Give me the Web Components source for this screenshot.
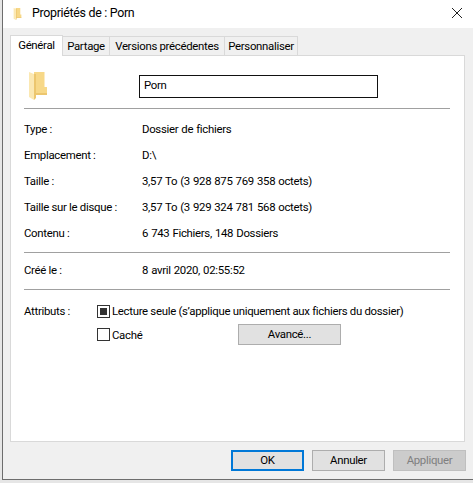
<!DOCTYPE html>
<html>
<head>
<meta charset="utf-8">
<style>
  html, body { margin: 0; height: 100%; background: #e6e6e6; overflow: hidden; }
</style>
</head>
<body>
<prop-dialog title="Propriétés de : Porn" name="Porn"></prop-dialog>

<script>
const UI_FONT = `Roboto, "Liberation Sans", sans-serif`;
const UI_TEXT = `font: 11.4px/18px ${UI_FONT}; letter-spacing: -0.3px; color: #000;`;

const FOLDER = `
  <svg viewBox="0 0 18 28" width="100%" height="100%">
    <path d="M5 0 L15.5 0 L15.5 15 L18 15 L18 23 L5 23 Z" fill="#f7d888"/>
    <path d="M5 2 L7 2 L7 21 L18 21 L18 23 L7 23 L7 26 L5 28 Z" fill="#ecc66e"/>
    <path d="M0 0 L5 2 L5 28 L0 25 Z" fill="#fbe8b2"/>
  </svg>`;

class TabStrip extends HTMLElement {
  constructor() {
    super();
    this.attachShadow({ mode: 'open' });
    this.shadowRoot.innerHTML = `
      <style>
        :host { display: flex; align-items: flex-end; height: 20px; padding-left: 7px; position: relative; z-index: 1; }
        .tab {
          box-sizing: border-box; height: 19px; margin-right: -1px; text-align: center;
          background: #f0f0f0; border: 1px solid #d9d9d9; border-bottom: 0;
          ${UI_TEXT} white-space: nowrap;
        }
        .tab.on {
          height: 21px; margin-bottom: -1px; background: #fff;
          position: relative; z-index: 1;
        }
      </style>
      <div class="tab on" style="width:53px">Général</div>
      <div class="tab" style="width:48px">Partage</div>
      <div class="tab" style="width:116px">Versions précédentes</div>
      <div class="tab" style="width:74px">Personnaliser</div>
    `;
  }
}

class PropRow extends HTMLElement {
  constructor() {
    super();
    this.attachShadow({ mode: 'open' });
    this.shadowRoot.innerHTML = `
      <style>
        :host { display: grid; grid-template-columns: 118px 1fr; height: 26px; ${UI_TEXT} }
        div { white-space: nowrap; }
        .val { word-spacing: 0.5px; }
      </style>
      <div><slot name="label"></slot></div>
      <div class="val"><slot></slot></div>
    `;
  }
}

class CheckBox extends HTMLElement {
  constructor() {
    super();
    this.attachShadow({ mode: 'open' });
    this.shadowRoot.innerHTML = `
      <style>
        :host { display: flex; align-items: center; gap: 2px; ${UI_TEXT} white-space: nowrap; }
        .box { box-sizing: border-box; width: 13px; height: 13px; border: 1px solid #333; background: #fff; display: grid; place-items: center; flex: none; }
        :host([mixed]) .box::after { content: ""; width: 7px; height: 7px; background: #333; }
      </style>
      <span class="box"></span><slot></slot>
    `;
  }
}

class DlgButton extends HTMLElement {
  constructor() {
    super();
    this.attachShadow({ mode: 'open' });
    this.shadowRoot.innerHTML = `
      <style>
        :host {
          display: block; box-sizing: border-box; width: 73px; height: 21px;
          background: #e1e1e1; border: 1px solid #adadad; text-align: center;
          ${UI_TEXT} line-height: 19px;
        }
        :host([primary]) { border: 2px solid #0078d7; line-height: 17px; }
        :host([disabled]) { background: #cccccc; border-color: #bfbfbf; color: #7f7f7f; }
      </style>
      <slot></slot>
    `;
  }
}

class PropDialog extends HTMLElement {
  constructor() {
    super();
    this.attachShadow({ mode: 'open' });
    const name = this.getAttribute('name');
    this.shadowRoot.innerHTML = `
      <style>
        :host {
          display: block; box-sizing: border-box; width: 471px; height: 480px; margin-left: 2px;
          background: #f0f0f0; border-left: 1px solid #6d6d6d; border-bottom: 1px solid #6d6d6d;
          ${UI_TEXT}
        }
        .title { height: 28px; background: #fff; display: flex; align-items: center; position: relative; padding-left: 10px; }
        .title .ico { width: 9px; height: 12px; margin-right: 10px; margin-bottom: 3px; }
        .title .txt { font-size: 12.4px; letter-spacing: -0.3px; margin-bottom: 2px; }
        .title svg.x { position: absolute; right: 10px; top: 7px; }
        .body { padding-top: 7px; }
        .panel {
          box-sizing: border-box; margin-left: 7px; width: 455px; height: 387px;
          background: #fff; border: 1px solid #d9d9d9; padding: 0 13px;
        }
        .head { display: flex; align-items: center; padding: 16px 0 8px; }
        .head .ico { width: 18px; height: 28px; margin-left: 5px; }
        .name {
          box-sizing: border-box; margin-left: 92px; width: 239px; height: 23px;
          border: 1px solid #111; padding: 0 4px; line-height: 19px;
        }
        hr { border: 0; border-top: 1px solid #a0a0a0; margin: 0; width: 426px; }
        .rows { padding-top: 11px; }
        .foot { display: flex; justify-content: flex-end; gap: 8px; padding: 8px 7px 0 0; }
        .attr { display: grid; grid-template-columns: 73px 1fr; padding-top: 12px; }
        .second { display: flex; align-items: center; margin-top: 4px; }
        .second check-box { flex: 0 0 141px; }
        .adv { width: 103px; }
      </style>
      <div class="title">
        <span class="ico">${FOLDER}</span>
        <span class="txt">${this.getAttribute('title')}</span>
        <svg class="x" width="12" height="12" viewBox="0 0 12 12"><path d="M1 1 L11 11 M11 1 L1 11" stroke="#222" stroke-width="1" fill="none"/></svg>
      </div>
      <div class="body">
        <tab-strip></tab-strip>
        <div class="panel">
          <div class="head"><span class="ico">${FOLDER}</span><div class="name">${name}</div></div>
          <hr>
          <div class="rows">
            <prop-row><span slot="label">Type :</span>Dossier de fichiers</prop-row>
            <prop-row><span slot="label">Emplacement :</span>D:\\</prop-row>
            <prop-row><span slot="label">Taille :</span>3,57 To (3 928 875 769 358 octets)</prop-row>
            <prop-row><span slot="label">Taille sur le disque :</span>3,57 To (3 929 324 781 568 octets)</prop-row>
            <prop-row style="height:28px"><span slot="label">Contenu :</span>6 743 Fichiers, 148 Dossiers</prop-row>
          </div>
          <hr>
          <div style="padding-top:8px"><prop-row style="height:28px"><span slot="label">Créé le :</span>8 avril 2020, 02:55:52</prop-row></div>
          <hr>
          <div class="attr">
            <div>Attributs :</div>
            <div>
              <check-box mixed>Lecture seule (s’applique uniquement aux fichiers du dossier)</check-box>
              <div class="second"><check-box>Caché</check-box><dlg-button class="adv">Avancé...</dlg-button></div>
            </div>
          </div>
        </div>
        <div class="foot">
          <dlg-button primary>OK</dlg-button>
          <dlg-button>Annuler</dlg-button>
          <dlg-button disabled>Appliquer</dlg-button>
        </div>
      </div>
    `;
  }
}

customElements.define('tab-strip', TabStrip);
customElements.define('prop-row', PropRow);
customElements.define('check-box', CheckBox);
customElements.define('dlg-button', DlgButton);
customElements.define('prop-dialog', PropDialog);
</script>
</body>
</html>
